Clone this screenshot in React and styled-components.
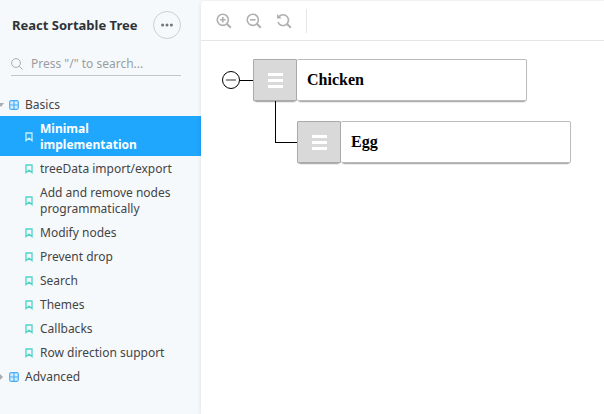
import { useState } from 'react';
import styled, { createGlobalStyle } from 'styled-components';

const GlobalStyle = createGlobalStyle`
  * {
    box-sizing: border-box;
  }

  body {
    margin: 0;
    background: #f6f9fc;
    font-family: "Noto Sans", "Open Sans", sans-serif;
    font-size: 12px;
    color: #444;
  }

  button, input {
    font-family: inherit;
    font-size: inherit;
  }
`;

const Layout = styled.div`
  display: flex;
  min-height: 100vh;
`;

const Sidebar = styled.aside`
  flex: 0 0 201px;
  min-width: 0;
`;

const Heading = styled.header`
  display: flex;
  align-items: center;
  justify-content: space-between;
  padding: 11px 20px 0 12px;
`;

const Brand = styled.a`
  color: #2e3338;
  font-size: 13px;
  font-weight: 700;
  line-height: 28px;
  text-decoration: none;
  white-space: nowrap;
`;

const MenuButton = styled.button`
  display: flex;
  align-items: center;
  justify-content: center;
  width: 28px;
  height: 28px;
  padding: 0;
  border: 1px solid #ccd0d3;
  border-radius: 50%;
  background: transparent;
  color: #70757a;
`;

const SearchField = styled.label`
  display: flex;
  align-items: center;
  gap: 8px;
  height: 24px;
  margin: 13px 20px 16px 11px;
  border-bottom: 1px solid #c3c6c9;
  color: #a9adb0;
`;

const SearchInput = styled.input`
  flex: 1;
  min-width: 0;
  padding: 0;
  border: 0;
  outline: 0;
  background: transparent;

  &::placeholder {
    color: #999da0;
    opacity: 1;
  }
`;

const StoryList = styled.ul`
  margin: 0;
  padding: 0;
  list-style: none;
`;

const GroupButton = styled.button`
  display: flex;
  align-items: center;
  width: 100%;
  padding: 5px 0 3px;
  border: 0;
  background: transparent;
  color: #444;
  line-height: 16px;
  text-align: left;

  svg + svg {
    margin: 0 6px 0 5px;
  }
`;

const StoryLink = styled.a`
  display: flex;
  align-items: center;
  gap: 7px;
  padding: 5px 20px 3px 25px;
  background: ${props => (props.$active ? '#1ea7fd' : 'transparent')};
  color: ${props => (props.$active ? '#fff' : '#444')};
  font-weight: ${props => (props.$active ? 700 : 400)};
  line-height: 16px;
  text-decoration: none;

  svg {
    flex: none;
    color: ${props => (props.$active ? '#c4f0f8' : '#4fd3c8')};
  }
`;

const Panel = styled.main`
  flex: 1;
  min-width: 0;
  margin-top: 1px;
  border-top-left-radius: 4px;
  background: #fff;
  box-shadow: 0 1px 5px rgba(0, 0, 0, 0.1);
`;

const Toolbar = styled.div`
  display: flex;
  align-items: center;
  gap: 14px;
  height: 40px;
  padding-left: 15px;
  border-bottom: 1px solid #e5e5e5;
`;

const ToolButton = styled.button`
  display: flex;
  padding: 0;
  border: 0;
  background: transparent;
  color: #b0b0b0;
`;

const Separator = styled.span`
  width: 1px;
  height: 24px;
  background: #e5e5e5;
`;

const Tree = styled.ul`
  margin: 0;
  padding: 18px 0 0 21px;
  list-style: none;
`;

const Branch = styled.ul`
  margin: 0;
  padding: 0 0 0 53px;
  list-style: none;
`;

const Row = styled.div`
  display: flex;
  align-items: center;
`;

const ChildRow = styled.div`
  display: flex;
  align-items: flex-end;
  height: 62px;
`;

const Elbow = styled.span`
  align-self: flex-start;
  width: 23px;
  height: 42px;
  margin-right: -1px;
  border-left: 1px solid #000;
  border-bottom: 1px solid #000;
`;

const CollapseButton = styled.button`
  display: flex;
  align-items: center;
  justify-content: center;
  width: 18px;
  height: 18px;
  padding: 0;
  border: 1px solid #000;
  border-radius: 50%;
  background: #fff;

  &::before {
    content: "";
    width: 10px;
    height: 2px;
    background: #989898;
  }
`;

const Stem = styled.span`
  width: 13px;
  height: 1px;
  background: #000;
`;

const Handle = styled.div`
  display: flex;
  flex-direction: column;
  align-items: center;
  justify-content: center;
  gap: 3px;
  width: 44px;
  height: 42px;
  border: 1px solid #aaa;
  border-radius: 1px;
  background: #d9d9d9;
  box-shadow: 0 2px 2px -2px #000;
  cursor: move;
`;

const HandleBar = styled.span`
  width: 15px;
  height: 3px;
  background: #fff;
`;

const NodeBox = styled.div`
  display: flex;
  align-items: center;
  width: 230px;
  height: 42px;
  padding: 0 5px 0 10px;
  border: 1px solid #bbb;
  border-left: 0;
  border-radius: 2px;
  background: #fff;
  box-shadow: 0 2px 2px -2px #000;
  color: #000;
  font-family: "Liberation Serif", "Times New Roman", serif;
  font-size: 16px;
  font-weight: 700;
`;

const BookmarkIcon = () => (
  <svg width="8" height="10" viewBox="0 0 8 10" fill="none" stroke="currentColor" aria-hidden="true">
    <path d="M1 1h6v7.6L4 6.2 1 8.6z" strokeWidth="1.3" />
  </svg>
);

const GridIcon = () => (
  <svg width="10" height="10" viewBox="0 0 10 10" fill="none" stroke="#49adf5" aria-hidden="true">
    <rect x=".7" y=".7" width="8.6" height="8.6" rx="1.5" fill="#d6edff" strokeWidth="1.2" />
    <path d="M5 1v8M1 5h8" strokeWidth="1.2" />
  </svg>
);

const ArrowIcon = ({ open }) => (
  <svg width="4" height="8" viewBox="0 0 4 8" fill="#aaadb0" aria-hidden="true">
    <path d={open ? 'M-2 2h6L1 6z' : 'M0 1l3 3-3 3z'} />
  </svg>
);

const SearchIcon = () => (
  <svg width="12" height="12" viewBox="0 0 12 12" fill="none" stroke="currentColor" aria-hidden="true">
    <circle cx="5" cy="5" r="4.4" />
    <path d="M8.2 8.2l3.3 3.3" />
  </svg>
);

const DotsIcon = () => (
  <svg width="12" height="4" viewBox="0 0 12 4" fill="currentColor" aria-hidden="true">
    <circle cx="1.6" cy="2" r="1.5" />
    <circle cx="6" cy="2" r="1.5" />
    <circle cx="10.4" cy="2" r="1.5" />
  </svg>
);

const ZoomIcon = ({ kind }) => (
  <svg width="16" height="16" viewBox="0 0 16 16" fill="none" stroke="currentColor" strokeWidth="1.6" aria-hidden="true">
    {kind === 'reset' ? (
      <>
        <path d="M3 3.6A5.4 5.4 0 1 1 2 9" />
        <path d="M1 1v4.6h4.6z" fill="currentColor" stroke="none" />
      </>
    ) : (
      <>
        <circle cx="6.8" cy="6.8" r="5.6" />
        <path d={kind === 'in' ? 'M4 6.8h5.6M6.8 4v5.6' : 'M4 6.8h5.6'} />
      </>
    )}
    <path d="M10.8 10.8l4 4" strokeWidth="2" />
  </svg>
);

const stories = [
  'Minimal implementation',
  'treeData import/export',
  'Add and remove nodes programmatically',
  'Modify nodes',
  'Prevent drop',
  'Search',
  'Themes',
  'Callbacks',
  'Row direction support',
];

function TreeNode({ title }) {
  return (
    <>
      <Handle>
        <HandleBar />
        <HandleBar />
        <HandleBar />
      </Handle>
      <NodeBox>{title}</NodeBox>
    </>
  );
}

function App() {
  const [active, setActive] = useState(stories[0]);
  const [groupOpen, setGroupOpen] = useState(true);
  const [expanded, setExpanded] = useState(true);

  return (
    <Layout>
      <GlobalStyle />
      <Sidebar>
        <Heading>
          <Brand href="#">React Sortable Tree</Brand>
          <MenuButton type="button" aria-label="Menu"><DotsIcon /></MenuButton>
        </Heading>
        <SearchField>
          <SearchIcon />
          <SearchInput type="text" aria-label="Search stories" placeholder={'Press "/" to search...'} />
        </SearchField>
        <StoryList>
          <li>
            <GroupButton type="button" aria-expanded={groupOpen} onClick={() => setGroupOpen(!groupOpen)}>
              <ArrowIcon open={groupOpen} />
              <GridIcon />
              Basics
            </GroupButton>
            {groupOpen && (
              <StoryList>
                {stories.map(story => (
                  <li key={story}>
                    <StoryLink href="#" $active={story === active} onClick={() => setActive(story)}>
                      <BookmarkIcon />
                      {story}
                    </StoryLink>
                  </li>
                ))}
              </StoryList>
            )}
          </li>
          <li>
            <GroupButton type="button" aria-expanded="false">
              <ArrowIcon />
              <GridIcon />
              Advanced
            </GroupButton>
          </li>
        </StoryList>
      </Sidebar>
      <Panel>
        <Toolbar>
          <ToolButton type="button" aria-label="Zoom in"><ZoomIcon kind="in" /></ToolButton>
          <ToolButton type="button" aria-label="Zoom out"><ZoomIcon kind="out" /></ToolButton>
          <ToolButton type="button" aria-label="Reset zoom"><ZoomIcon kind="reset" /></ToolButton>
          <Separator />
        </Toolbar>
        <Tree>
          <li>
            <Row>
              <CollapseButton type="button" aria-label="Collapse" onClick={() => setExpanded(!expanded)} />
              <Stem />
              <TreeNode title="Chicken" />
            </Row>
            {expanded && (
              <Branch>
                <li>
                  <ChildRow>
                    <Elbow />
                    <TreeNode title="Egg" />
                  </ChildRow>
                </li>
              </Branch>
            )}
          </li>
        </Tree>
      </Panel>
    </Layout>
  );
}

export default App;
